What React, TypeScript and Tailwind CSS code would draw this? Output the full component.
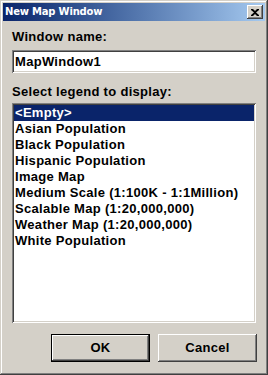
import React from "react";

const legends = [
  "<Empty>",
  "Asian Population",
  "Black Population",
  "Hispanic Population",
  "Image Map",
  "Medium Scale (1:100K - 1:1Million)",
  "Scalable Map (1:20,000,000)",
  "Weather Map (1:20,000,000)",
  "White Population",
];

function Button({ label, primary }: { label: string; primary?: boolean }) {
  return (
    <button
      className={
        "w-[99px] h-[28px] bg-[#d4d0c8] text-[13px] font-bold tracking-[0.3px] text-black " +
        (primary
          ? "border border-black shadow-[inset_-1px_-1px_#404040,inset_1px_1px_#ffffff,inset_-2px_-2px_#808080]"
          : "shadow-[inset_-1px_-1px_#404040,inset_1px_1px_#ffffff,inset_-2px_-2px_#808080,inset_2px_2px_#d4d0c8]")
      }
    >
      {label}
    </button>
  );
}

export default function App() {
  const selected = 0;

  return (
    <div
      className="w-[268px] h-[375px] bg-[#d4d0c8] p-[3px] flex flex-col shadow-[inset_-1px_-1px_#404040,inset_1px_1px_#d4d0c8,inset_-2px_-2px_#808080,inset_2px_2px_#ffffff]"
      style={{ fontFamily: '"Liberation Sans", Arial, sans-serif' }}
    >
      {/* title bar */}
      <div className="h-[18px] flex items-center justify-between bg-gradient-to-r from-[#0a246a] to-[#a6caf0] pl-[2px] pr-[2px]">
        <span className="text-white font-bold text-[10px] tracking-[-0.2px] leading-none font-['DejaVu_Sans',sans-serif]">
          New Map Window
        </span>
        <div className="w-[16px] h-[14px] bg-[#d4d0c8] flex items-center justify-center shadow-[inset_-1px_-1px_#404040,inset_1px_1px_#ffffff,inset_-2px_-2px_#808080]">
          <svg width="8" height="7" viewBox="0 0 8 7">
            <path d="M0 0h2l2 2 2-2h2v1L5 3.5 8 6v1H6L4 5 2 7H0V6l3-2.5L0 1z" fill="#000" />
          </svg>
        </div>
      </div>

      <div className="flex-1 flex flex-col px-[9px] text-[13px] font-bold tracking-[0.3px] text-black">
        <label className="mt-[8px] leading-[16px]">Window name:</label>
        <div className="mt-[5px] h-[23px] bg-white flex items-center pl-[3px] shadow-[inset_1px_1px_#808080,inset_-1px_-1px_#ffffff,inset_2px_2px_#404040,inset_-2px_-2px_#d4d0c8]">
          MapWindow1
        </div>

        <label className="mt-[11px] leading-[16px]">Select legend to display:</label>
        <div className="mt-[3px] h-[220px] bg-white p-[2px] shadow-[inset_1px_1px_#808080,inset_-1px_-1px_#ffffff,inset_2px_2px_#404040,inset_-2px_-2px_#d4d0c8]">
          <ul className="flex flex-col">
            {legends.map((name, i) => (
              <li
                key={name}
                className={
                  "h-[16px] leading-[16px] pl-[1px] whitespace-nowrap " +
                  (i === selected ? "bg-[#0a246a] text-white" : "")
                }
              >
                {name}
              </li>
            ))}
          </ul>
        </div>

        <div className="mt-[11px] flex justify-end gap-[8px] mr-[-1px]">
          <Button label="OK" primary />
          <Button label="Cancel" />
        </div>
      </div>
    </div>
  );
}
